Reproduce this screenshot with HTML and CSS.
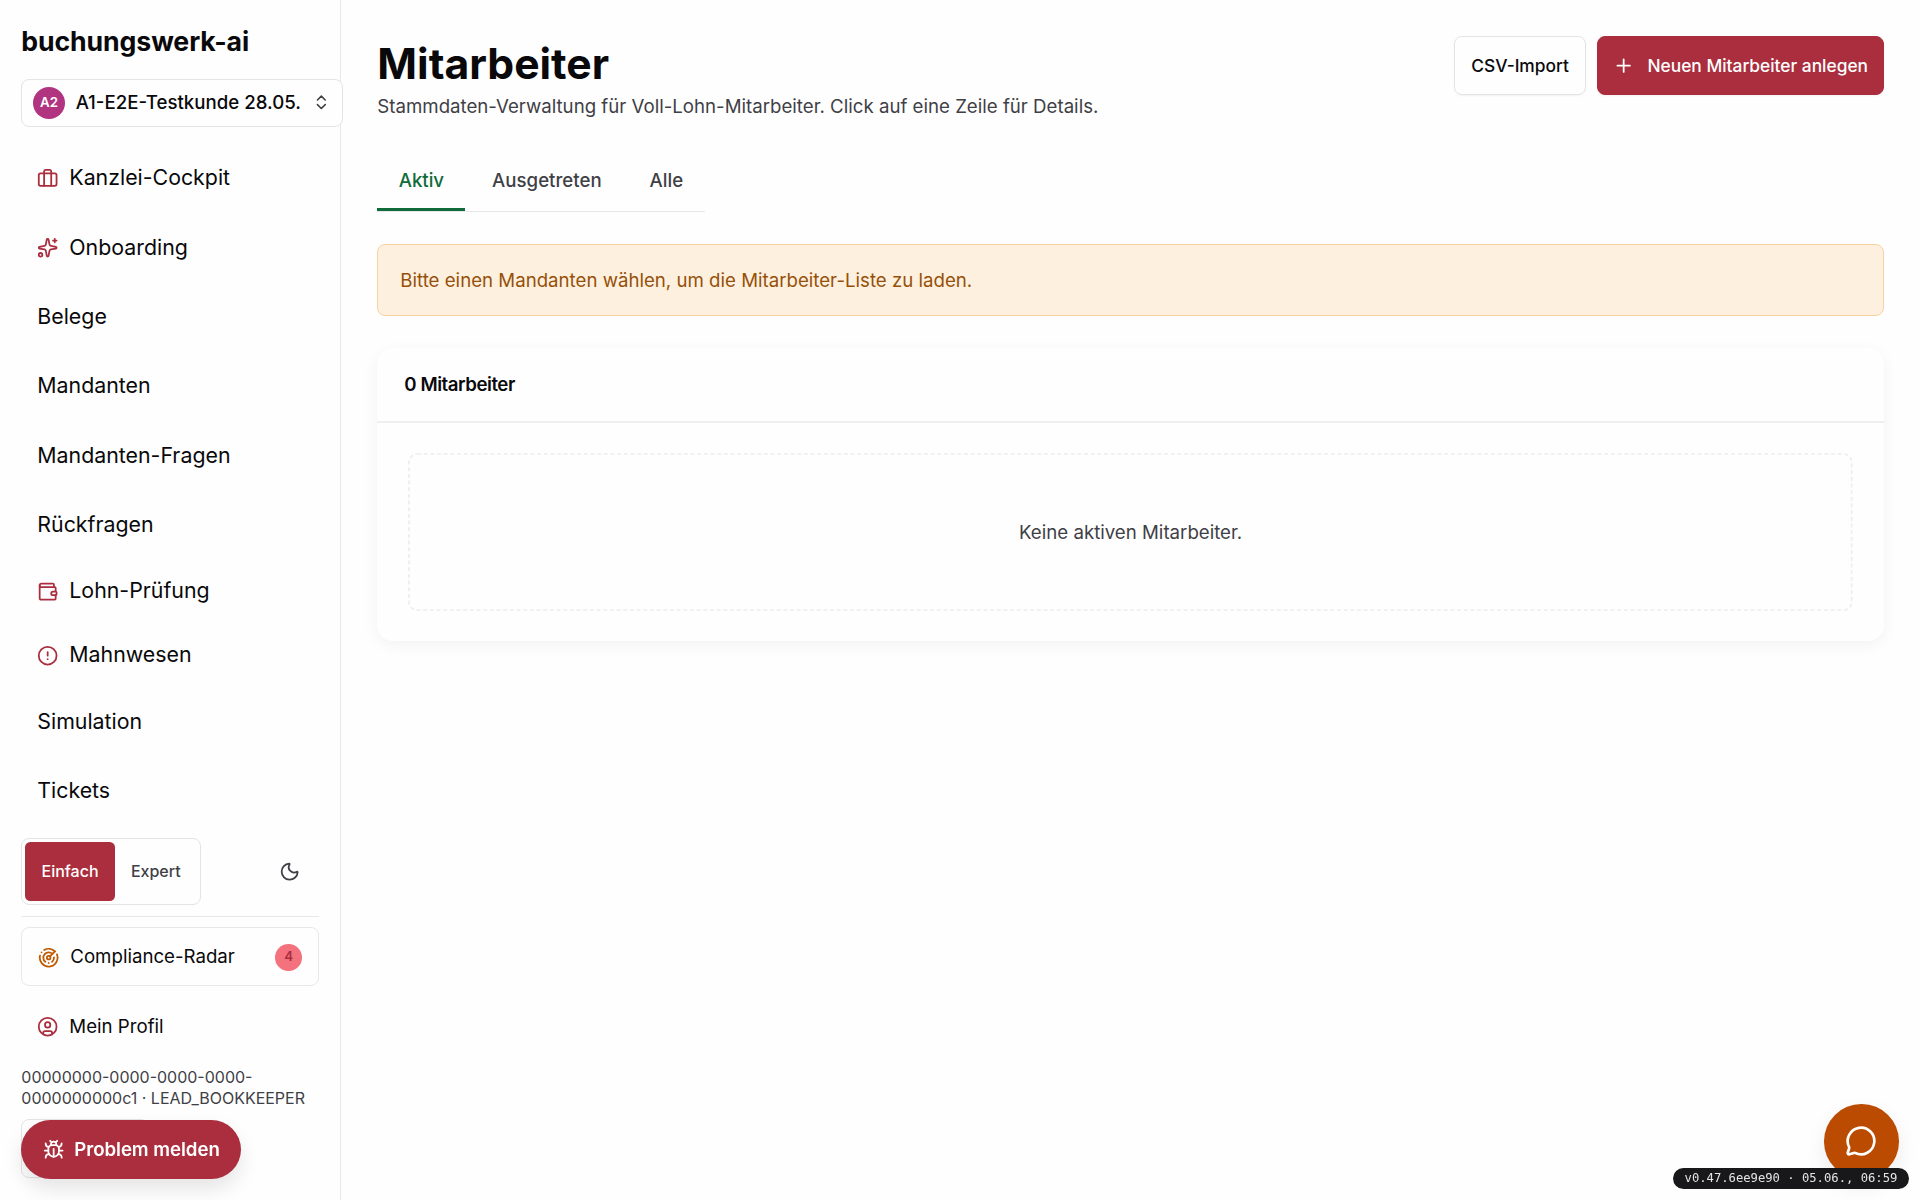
FILE: index.html
```html
<!DOCTYPE html>
<html lang="de">
<head>
    <meta charset="UTF-8">
    <meta name="viewport" content="width=device-width, initial-scale=1.0">
    <title>Mitarbeiter - buchungswerk-ai</title>
    <link rel="stylesheet" href="styles.css">
</head>
<body>

    <div class="layout">
        <!-- Seitenleiste -->
        <aside class="sidebar">
            <div class="logo">buchungswerk-ai</div>

            <button class="mandant-select">
                <span class="avatar">A2</span>
                <span class="mandant-name">A1-E2E-Testkunde 28.05.</span>
                <svg class="icon icon-small" viewBox="0 0 24 24"><path d="m7 15 5 5 5-5"/><path d="m7 9 5-5 5 5"/></svg>
            </button>

            <nav class="nav">
                <a class="nav-item">
                    <svg class="icon" viewBox="0 0 24 24"><path d="M16 20V4a2 2 0 0 0-2-2h-4a2 2 0 0 0-2 2v16"/><rect x="2" y="6" width="20" height="14" rx="2"/></svg>
                    Kanzlei-Cockpit
                </a>
                <a class="nav-item">
                    <svg class="icon" viewBox="0 0 24 24"><path d="M11.017 2.814a1 1 0 0 1 1.966 0l1.051 5.558a2 2 0 0 0 1.594 1.594l5.558 1.051a1 1 0 0 1 0 1.966l-5.558 1.051a2 2 0 0 0-1.594 1.594l-1.051 5.558a1 1 0 0 1-1.966 0l-1.051-5.558a2 2 0 0 0-1.594-1.594l-5.558-1.051a1 1 0 0 1 0-1.966l5.558-1.051a2 2 0 0 0 1.594-1.594z"/><path d="M20 2v4"/><path d="M22 4h-4"/><circle cx="4" cy="20" r="2"/></svg>
                    Onboarding
                </a>
                <a class="nav-item">Belege</a>
                <a class="nav-item">Mandanten</a>
                <a class="nav-item">Mandanten-Fragen</a>
                <a class="nav-item">Rückfragen</a>
                <a class="nav-item nav-item-compact">
                    <svg class="icon" viewBox="0 0 24 24"><path d="M19 7V4a1 1 0 0 0-1-1H5a2 2 0 0 0 0 4h15a1 1 0 0 1 1 1v4h-3a2 2 0 0 0 0 4h3a1 1 0 0 0 1-1v-2a1 1 0 0 0-1-1"/><path d="M3 5v14a2 2 0 0 0 2 2h15a1 1 0 0 0 1-1v-4"/></svg>
                    Lohn-Prüfung
                </a>
                <a class="nav-item nav-item-compact">
                    <svg class="icon" viewBox="0 0 24 24"><circle cx="12" cy="12" r="10"/><path d="M12 8v4"/><path d="M12 16h.01"/></svg>
                    Mahnwesen
                </a>
                <a class="nav-item">Simulation</a>
                <a class="nav-item">Tickets</a>
            </nav>

            <div class="mode-row">
                <div class="mode-toggle">
                    <button class="mode active">Einfach</button>
                    <button class="mode">Expert</button>
                </div>
                <button class="theme-button">
                    <svg class="icon" viewBox="0 0 24 24"><path d="M20.985 12.486a9 9 0 1 1-9.473-9.472c.405-.022.617.46.402.803a6 6 0 0 0 8.268 8.268c.344-.215.825-.004.803.401"/></svg>
                </button>
            </div>

            <div class="sidebar-footer">
                <a class="radar-link">
                    <svg class="icon" viewBox="0 0 24 24"><path d="M19.07 4.93A10 10 0 0 0 6.99 3.34"/><path d="M4 6h.01"/><path d="M2.29 9.62A10 10 0 1 0 21.31 8.35"/><path d="M16.24 7.76A6 6 0 1 0 8.23 16.67"/><path d="M12 18h.01"/><path d="M17.99 11.66A6 6 0 0 1 15.77 16.67"/><circle cx="12" cy="12" r="2"/><path d="m13.41 10.59 5.66-5.66"/></svg>
                    <span>Compliance-Radar</span>
                    <span class="badge">4</span>
                </a>
                <a class="profile-link">
                    <svg class="icon" viewBox="0 0 24 24"><circle cx="12" cy="12" r="10"/><circle cx="12" cy="10" r="3"/><path d="M7 20.662V19a2 2 0 0 1 2-2h6a2 2 0 0 1 2 2v1.662"/></svg>
                    Mein Profil
                </a>
                <p class="user-info">00000000-0000-0000-0000-0000000000c1 · LEAD_BOOKKEEPER</p>
                <button class="logout-button"></button>
            </div>
        </aside>

        <!-- Inhalt -->
        <main class="content">
            <header class="page-header">
                <div>
                    <h1>Mitarbeiter</h1>
                    <p class="subtitle">Stammdaten-Verwaltung für Voll-Lohn-Mitarbeiter. Click auf eine Zeile für Details.</p>
                </div>
                <div class="actions">
                    <button class="button">CSV-Import</button>
                    <button class="button button-primary">
                        <svg class="icon" viewBox="0 0 24 24"><path d="M5 12h14"/><path d="M12 5v14"/></svg>
                        Neuen Mitarbeiter anlegen
                    </button>
                </div>
            </header>

            <div class="tabs">
                <button class="tab active">Aktiv</button>
                <button class="tab">Ausgetreten</button>
                <button class="tab">Alle</button>
            </div>

            <div class="alert">Bitte einen Mandanten wählen, um die Mitarbeiter-Liste zu laden.</div>

            <section class="card">
                <h2>0 Mitarbeiter</h2>
                <div class="card-body">
                    <div class="empty">
                        <svg class="empty-border"><rect/></svg>
                        Keine aktiven Mitarbeiter.
                    </div>
                </div>
            </section>
        </main>
    </div>

    <!-- Schwebende Elemente -->
    <button class="report-button">
        <svg class="icon" viewBox="0 0 24 24"><path d="m8 2 1.88 1.88"/><path d="M14.12 3.88 16 2"/><path d="M9 7.13v-1a3.003 3.003 0 1 1 6 0v1"/><path d="M12 20c-3.3 0-6-2.7-6-6v-3a4 4 0 0 1 4-4h4a4 4 0 0 1 4 4v3c0 3.3-2.7 6-6 6"/><path d="M12 20v-9"/><path d="M6.53 9C4.6 8.8 3 7.1 3 5"/><path d="M6 13H2"/><path d="M3 21c0-2.1 1.7-3.9 3.8-4"/><path d="M20.97 5c0 2.1-1.6 3.8-3.5 4"/><path d="M22 13h-4"/><path d="M17.2 17c2.1.1 3.8 1.9 3.8 4"/></svg>
        Problem melden
    </button>
    <button class="chat-button">
        <svg class="icon" viewBox="0 0 24 24"><path d="M2.992 16.342a2 2 0 0 1 .094 1.167l-1.065 3.29a1 1 0 0 0 1.236 1.168l3.413-.998a2 2 0 0 1 1.099.092 10 10 0 1 0-4.777-4.719"/></svg>
    </button>
    <div class="version">v0.47.6ee9e90 · 05.06., 06:59</div>

</body>
</html>
```
FILE: styles.css
```css
/* 1rem = 21.33px */
html {
    font-size: 133.3333%;
}

* {
    box-sizing: border-box;
}

body {
    margin: 0;
    font-family: Inter, sans-serif;
    font-size: 0.875rem;
    line-height: 1.5;
    color: #09090b;
    background-color: #fefefe;
}

h1, h2, p {
    margin: 0;
}

button {
    font: inherit;
    color: inherit;
    background: none;
    border: none;
    padding: 0;
    cursor: pointer;
}

.icon {
    width: 1rem;
    height: 1rem;
    flex-shrink: 0;
    fill: none;
    stroke: currentColor;
    stroke-width: 2;
    stroke-linecap: round;
    stroke-linejoin: round;
}

.icon-small {
    width: 0.875rem;
    height: 0.875rem;
    color: #3f3f46;
}

.layout {
    display: flex;
    height: 100vh;
}

/* Seitenleiste */
.sidebar {
    width: 16rem;
    flex-shrink: 0;
    display: flex;
    flex-direction: column;
    padding: 1rem;
    border-right: 1px solid #e8e8ea;
}

.logo {
    font-size: 1.25rem;
    font-weight: 700;
    letter-spacing: -0.1px;
    line-height: 1.9375rem;
    height: 1.9375rem;
    margin-bottom: 0.75rem;
}

.mandant-select {
    width: 15.0625rem;
    height: 2.25rem;
    flex-shrink: 0;
    display: flex;
    align-items: center;
    gap: 0.5rem;
    padding: 0 0.5rem;
    border: 1px solid #e4e4e7;
    border-radius: 0.375rem;
    background-color: #fefefe;
    font-weight: 500;
    text-align: left;
}

.mandant-name {
    flex: 1;
    white-space: nowrap;
}

.avatar {
    width: 1.5rem;
    height: 1.5rem;
    border-radius: 50%;
    display: flex;
    align-items: center;
    justify-content: center;
    background-color: #b0347f;
    color: #fff;
    font-size: 0.625rem;
    font-weight: 600;
}

.nav {
    display: flex;
    flex-direction: column;
    gap: 0.25rem;
    margin-top: 0.875rem;
    font-size: 1rem;
}

.nav-item {
    height: 3rem;
    display: flex;
    align-items: center;
    gap: 0.5rem;
    padding: 2px 0.75rem 0;
}

.nav-item-compact {
    height: 2.75rem;
}

.nav-item .icon,
.profile-link .icon {
    color: #aa2e3e;
}

.mode-row {
    display: flex;
    align-items: center;
    justify-content: space-between;
    margin-top: 0.75rem;
}

.mode-toggle {
    display: flex;
    padding: 3px;
    border: 1px solid #e4e4e7;
    border-radius: 0.375rem;
    font-size: 0.75rem;
    font-weight: 500;
}

.mode {
    height: 2.75rem;
    padding: 0 0.76rem;
    border-radius: 0.25rem;
    color: #3f3f46;
}

.mode.active {
    background-color: #aa2e3e;
    color: #fff;
}

.theme-button {
    width: 2.75rem;
    height: 2.75rem;
    display: flex;
    align-items: center;
    justify-content: center;
    color: #3f3f46;
}

.sidebar-footer {
    display: flex;
    flex-direction: column;
    gap: 0.5rem;
    margin-top: 0.5rem;
    padding-top: 0.5rem;
    border-top: 1px solid #e8e8ea;
}

.radar-link,
.profile-link {
    height: 2.75rem;
    display: flex;
    align-items: center;
    gap: 0.5rem;
    padding: 1px 0.75rem 0;
}

.radar-link {
    border: 1px solid #e8e8ea;
    border-radius: 0.375rem;
}

.radar-link .icon {
    color: #c05a00;
}

.badge {
    width: 1.25rem;
    height: 1.25rem;
    margin-left: auto;
    border-radius: 50%;
    display: flex;
    align-items: center;
    justify-content: center;
    background-color: #f4727e;
    color: #aa2e3e;
    font-size: 0.625rem;
    font-weight: 600;
}

.user-info {
    padding-top: 1px;
    margin-bottom: -1px;
    color: #3f3f46;
    font-size: 0.75rem;
    line-height: 1rem;
}

.logout-button {
    height: 2.75rem;
    width: 6rem;
    border: 1px solid #e4e4e7;
    border-radius: 0.375rem;
}

/* Inhalt */
.content {
    flex: 1;
    padding: 36px;
}

.page-header {
    display: flex;
    justify-content: space-between;
    align-items: flex-start;
}

h1 {
    font-size: 2rem;
    font-weight: 700;
    line-height: 56px;
}

.subtitle {
    padding-top: 1px;
    color: #3f3f46;
    line-height: 28px;
}

.actions {
    display: flex;
    gap: 0.5rem;
}

.button {
    height: 2.75rem;
    display: flex;
    align-items: center;
    gap: 13px;
    padding: 1px 0.78rem 0;
    border: 1px solid #e4e4e7;
    border-radius: 0.375rem;
    font-size: 0.8125rem;
    font-weight: 500;
    box-shadow: 0 1px 2px rgba(0, 0, 0, 0.05);
}

.button-primary {
    padding: 1px 15px 0;
    background-color: #aa2e3e;
    border-color: #aa2e3e;
    color: #fff;
}

.tabs {
    display: inline-flex;
    gap: 0.25rem;
    margin-top: 31px;
    border-bottom: 1px solid #e8e8ea;
}

.tab {
    height: 59px;
    padding: 2px 1rem 0;
    border-bottom: 3px solid transparent;
    color: #3f3f46;
    font-weight: 500;
}

.tab.active {
    color: #0f6b3a;
    border-bottom-color: #0f6b3a;
}

.alert {
    margin-top: 32px;
    padding: 22px 22px 20px;
    border: 1px solid #f8d3a0;
    border-radius: 0.375rem;
    background-color: #fdf0df;
    color: #96500a;
}

.card {
    margin-top: 32px;
    border-radius: 16px;
    background-color: #fefefe;
    box-shadow: 0 4px 16px rgba(0, 0, 0, 0.05);
}

h2 {
    padding: 0 27px;
    border-bottom: 2px solid #efefef;
    font-size: 0.875rem;
    font-weight: 600;
    letter-spacing: -0.025em;
    line-height: 73px;
}

.card-body {
    padding: 30px 31px;
}

.empty {
    position: relative;
    height: 158px;
    padding-top: 2px;
    display: flex;
    align-items: center;
    justify-content: center;
    color: #3f3f46;
}

/* gestrichelter Rahmen mit kurzen Strichen */
.empty-border {
    position: absolute;
    inset: 0;
    width: 100%;
    height: 100%;
}

.empty-border rect {
    x: 1px;
    y: 1px;
    width: calc(100% - 2px);
    height: calc(100% - 2px);
    rx: 8px;
    fill: none;
    stroke: #ededef;
    stroke-width: 1.7px;
    stroke-dasharray: 4 2.67;
}

/* Schwebende Elemente */
.report-button {
    position: fixed;
    left: 1rem;
    bottom: 1rem;
    width: 220px;
    height: 2.75rem;
    display: flex;
    align-items: center;
    gap: 0.48rem;
    padding: 1px 0 0 1rem;
    border-radius: 2rem;
    background-color: #aa2e3e;
    color: #fff;
    font-weight: 600;
    letter-spacing: -0.05px;
    white-space: nowrap;
    box-shadow: 0 10px 20px rgba(0, 0, 0, 0.1);
}

.chat-button {
    position: fixed;
    right: 1rem;
    bottom: 1rem;
    width: 3.5rem;
    height: 3.5rem;
    display: flex;
    align-items: center;
    justify-content: center;
    border-radius: 50%;
    background-color: #ba4b00;
    color: #fff;
    box-shadow: 0 8px 20px rgba(0, 0, 0, 0.08);
}

.chat-button .icon {
    width: 1.5rem;
    height: 1.5rem;
}

.version {
    position: fixed;
    right: 0.5rem;
    bottom: 0.5rem;
    height: 1rem;
    padding: 0 12px;
    border-radius: 1rem;
    background-color: #18181b;
    color: #e4e4e7;
    font-family: "DejaVu Sans Mono", monospace;
    font-size: 12.2px;
    line-height: 1rem;
}
```
